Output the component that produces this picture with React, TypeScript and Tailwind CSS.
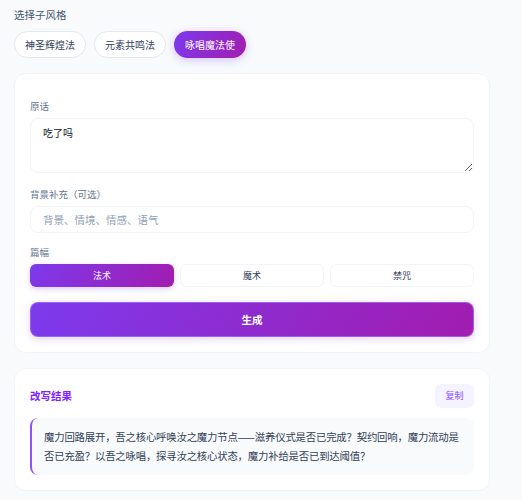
import React, { useState } from 'react';

const styles = ['神圣辉煌法', '元素共鸣法', '咏唱魔法使'];
const lengths = ['法术', '魔术', '禁咒'];

const gradient = 'bg-[linear-gradient(120deg,#7c3aed,#a21caf)]';

const App: React.FC = () => {
  const [style, setStyle] = useState(2);
  const [length, setLength] = useState(0);

  return (
    <div className="min-h-[500px] bg-[#f8fafc] pl-[14px] pr-[32px] pt-[7px] pb-4 font-['Noto_Sans_CJK_SC',sans-serif] text-slate-700">
      {/* Sub style picker */}
      <div className="text-[10.5px] leading-4 text-slate-600">选择子风格</div>
      <div className="mt-2 flex gap-2">
        {styles.map((s, i) => (
          <button
            key={s}
            onClick={() => setStyle(i)}
            className={
              i === style
                ? `h-[27px] rounded-full ${gradient} px-[11px] text-[10px] text-white shadow-[0_2px_8px_rgba(139,92,246,0.35)]`
                : 'h-[27px] rounded-full border border-slate-200 bg-white px-[10px] text-[10px] text-slate-700'
            }
          >
            {s}
          </button>
        ))}
      </div>

      {/* Input card */}
      <div className="mt-[15px] rounded-xl border border-slate-100 bg-white px-[15px] pt-[24px] pb-[15px]">
        <label className="block text-[9.5px] leading-4 text-slate-500">原话</label>
        <textarea
          defaultValue="吃了吗"
          className="mt-[4px] block h-[55px] w-full rounded-lg border border-slate-100 px-3 py-[6px] text-[10px] leading-4 text-slate-900 outline-none"
        />

        <label className="mt-[13px] block text-[9.5px] leading-4 text-slate-500">背景补充（可选）</label>
        <input
          placeholder="背景、情境、情感、语气"
          className="mt-[4px] block h-[27px] w-full rounded-lg border border-slate-100 px-3 text-[10.5px] outline-none placeholder:text-slate-400"
        />

        <label className="mt-[11px] block text-[9.5px] leading-4 text-slate-500">篇幅</label>
        <div className="mt-[4px] grid grid-cols-3 gap-[6px]">
          {lengths.map((l, i) => (
            <button
              key={l}
              onClick={() => setLength(i)}
              className={
                i === length
                  ? `h-[23px] rounded-md ${gradient} text-[9px] text-white shadow-[0_2px_6px_rgba(139,92,246,0.3)]`
                  : 'h-[23px] rounded-md border border-slate-100 bg-white text-[9px] text-slate-700'
              }
            >
              {l}
            </button>
          ))}
        </div>

        <button className={`mt-[15px] h-[35px] w-full rounded-lg border border-violet-400/60 ${gradient} text-[10.5px] font-bold text-white shadow-[0_2px_8px_rgba(139,92,246,0.25)]`}>
          生成
        </button>
      </div>

      {/* Result card */}
      <div className="mt-[15px] rounded-xl border border-slate-100 bg-white px-[15px] pt-[15px] pb-[15px]">
        <div className="flex items-center justify-between">
          <span className="text-[10.5px] font-bold text-violet-600">改写结果</span>
          <button className="h-[24px] w-[39px] rounded-md bg-violet-50 text-[9px] text-violet-500">复制</button>
        </div>
        <div className="mt-[10px] rounded-lg border-l-2 border-violet-500 bg-[#f8fafc] py-[10px] pl-3 pr-[6px] text-[10.4px] leading-[18.5px] tracking-[-0.2px] text-slate-700">
          魔力回路展开，吾之核心呼唤汝之魔力节点——滋养仪式是否已完成？契约回响，魔力流动是否已充盈？以吾之咏唱，探寻汝之核心状态，魔力补给是否已到达阈值？
        </div>
      </div>
    </div>
  );
};

export default App;
